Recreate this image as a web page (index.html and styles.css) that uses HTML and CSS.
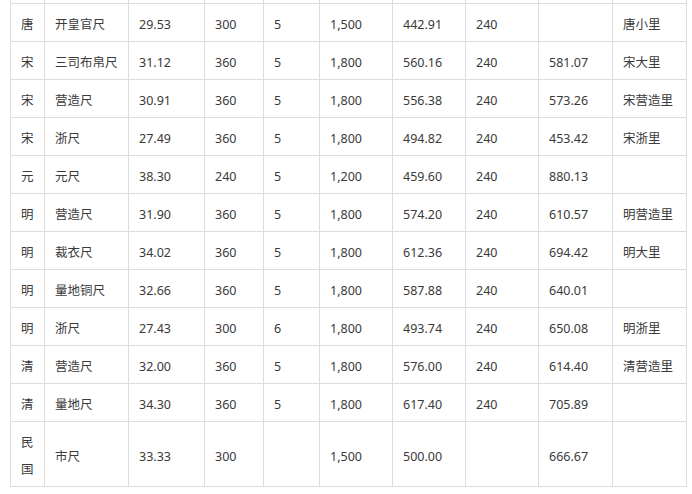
FILE: index.html
```html
<!DOCTYPE html>
<html lang="zh-CN">
<head>
<meta charset="utf-8">
<link rel="stylesheet" href="styles.css">
</head>
<body>
<div class="wrap">
<table class="grid">
<colgroup>
<col class="c1"><col class="c2"><col class="c3"><col class="c4"><col class="c5">
<col class="c6"><col class="c7"><col class="c8"><col class="c9"><col class="c10">
</colgroup>
<tbody>
<tr class="prev"><td></td><td></td><td></td><td></td><td></td><td></td><td></td><td></td><td></td><td></td></tr>
<tr><td>唐</td><td>开皇官尺</td><td>29.53</td><td>300</td><td>5</td><td>1,500</td><td>442.91</td><td>240</td><td></td><td>唐小里</td></tr>
<tr><td>宋</td><td>三司布帛尺</td><td>31.12</td><td>360</td><td>5</td><td>1,800</td><td>560.16</td><td>240</td><td>581.07</td><td>宋大里</td></tr>
<tr><td>宋</td><td>营造尺</td><td>30.91</td><td>360</td><td>5</td><td>1,800</td><td>556.38</td><td>240</td><td>573.26</td><td>宋营造里</td></tr>
<tr><td>宋</td><td>浙尺</td><td>27.49</td><td>360</td><td>5</td><td>1,800</td><td>494.82</td><td>240</td><td>453.42</td><td>宋浙里</td></tr>
<tr><td>元</td><td>元尺</td><td>38.30</td><td>240</td><td>5</td><td>1,200</td><td>459.60</td><td>240</td><td>880.13</td><td></td></tr>
<tr><td>明</td><td>营造尺</td><td>31.90</td><td>360</td><td>5</td><td>1,800</td><td>574.20</td><td>240</td><td>610.57</td><td>明营造里</td></tr>
<tr><td>明</td><td>裁衣尺</td><td>34.02</td><td>360</td><td>5</td><td>1,800</td><td>612.36</td><td>240</td><td>694.42</td><td>明大里</td></tr>
<tr><td>明</td><td>量地铜尺</td><td>32.66</td><td>360</td><td>5</td><td>1,800</td><td>587.88</td><td>240</td><td>640.01</td><td></td></tr>
<tr><td>明</td><td>浙尺</td><td>27.43</td><td>300</td><td>6</td><td>1,800</td><td>493.74</td><td>240</td><td>650.08</td><td>明浙里</td></tr>
<tr><td>清</td><td>营造尺</td><td>32.00</td><td>360</td><td>5</td><td>1,800</td><td>576.00</td><td>240</td><td>614.40</td><td>清营造里</td></tr>
<tr><td>清</td><td>量地尺</td><td>34.30</td><td>360</td><td>5</td><td>1,800</td><td>617.40</td><td>240</td><td>705.89</td><td></td></tr>
<tr><td>民国</td><td>市尺</td><td>33.33</td><td>300</td><td></td><td>1,500</td><td>500.00</td><td></td><td>666.67</td><td></td></tr>
</tbody>
</table>
</div>
</body>
</html>
```
FILE: styles.css
```css
html, body {
  margin: 0;
  padding: 0;
  background: #fff;
}
.wrap {
  width: 692px;
  height: 494px;
  overflow: hidden;
  padding-left: 10px;
  box-sizing: border-box;
}
.grid {
  border-collapse: collapse;
  table-layout: fixed;
  width: 677px;
  margin-top: -35px;
  font-family: "Noto Sans", "Noto Sans CJK SC", sans-serif;
  font-size: 12.5px;
  color: #3a3a3a;
}
.grid td {
  border: 1px solid #ddd;
  padding: 7px 10px 3px;
  line-height: 27px;
  vertical-align: middle;
  white-space: nowrap;
}
.grid td:first-child {
  white-space: normal;
  word-break: break-all;
}
.prev td {
  height: 27px;
}
.c1 { width: 34px; }
.c2 { width: 84px; }
.c3 { width: 76px; }
.c4 { width: 59px; }
.c5 { width: 56px; }
.c6 { width: 73px; }
.c7 { width: 73px; }
.c8 { width: 73px; }
.c9 { width: 74px; }
.c10 { width: 74px; }
```
